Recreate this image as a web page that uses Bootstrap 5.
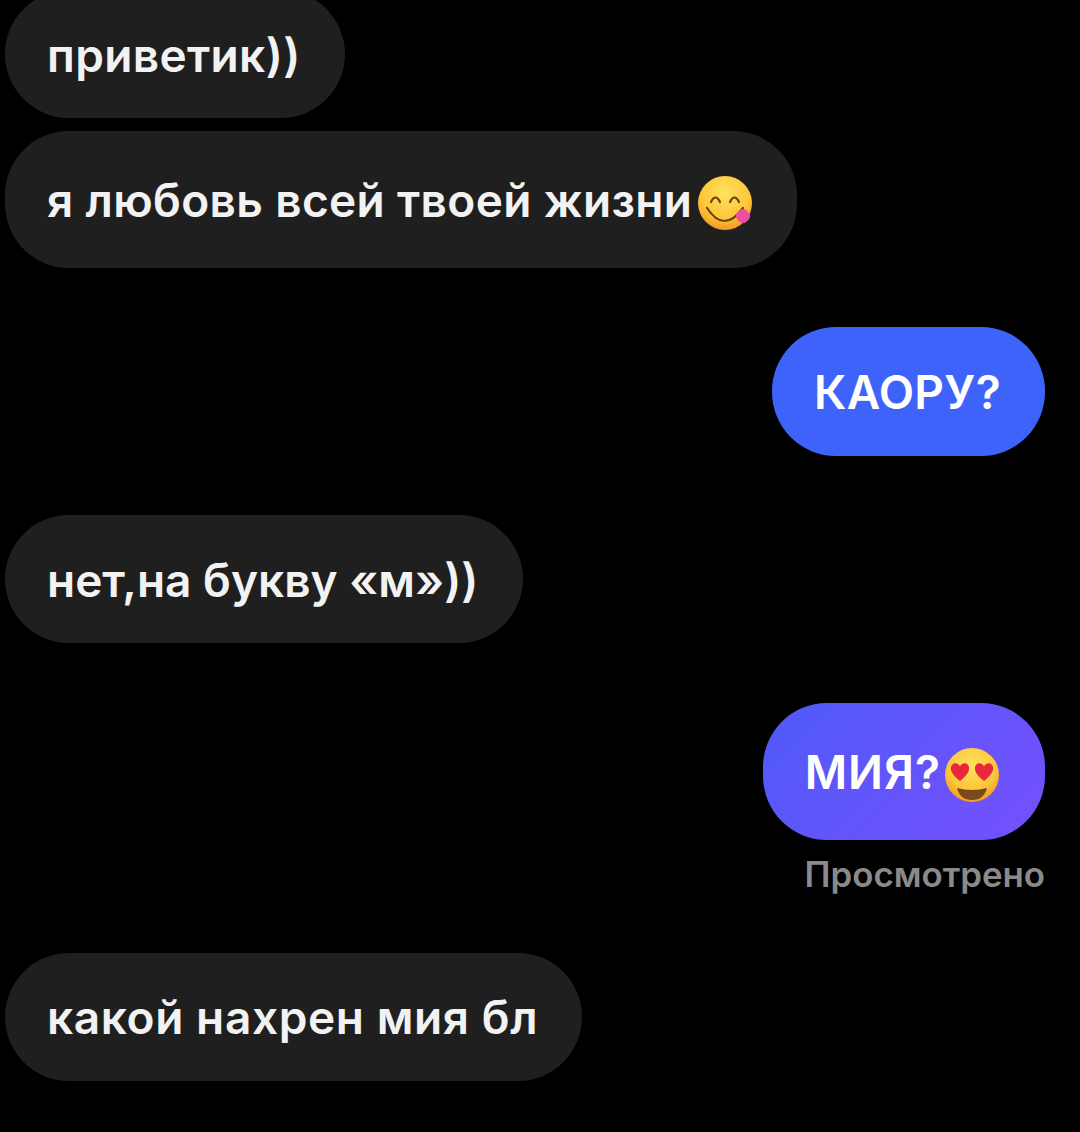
<!DOCTYPE html>
<html lang="ru">
<head>
  <meta charset="UTF-8" />
  <meta name="viewport" content="width=device-width, initial-scale=1.0"/>
  <title>Переписка</title>
  <link href="https://cdn.jsdelivr.net/npm/bootstrap@5.3.0/dist/css/bootstrap.min.css" rel="stylesheet">
  <style>
    html, body { background: #000; height: 100%; }
    body { overflow: hidden; font-family: Inter, "Liberation Sans", sans-serif; }
    .chat { height: 1132px; overflow: hidden; padding: 0 35px 0 5px; }
    .bubble {
      height: 128px; padding: 1px 44px 0 42px; border-radius: 64px;
      font-size: 46px; font-weight: 600; line-height: 1; letter-spacing: .35px;
      color: #fff; white-space: nowrap;
    }
    .bubble-in { background: #1f1f1f; color: #f2f2f2; }
    .bubble-kaoru { background: #3e63fb; height: 129px; }
    .bubble-miya { background: linear-gradient(135deg, #4f5af8, #7650fc); height: 137px; letter-spacing: 1px; padding-right: 45px; }
    .tall { height: 137px; }
    .first { margin-top: -10px; }
    .gap-s { margin-top: 13px; }
    .gap-l { margin-top: 59px; }
    .gap-m { margin-top: 59px; letter-spacing: 0; }
    .gap-x { margin-top: 60px; }
    .gap-v { margin-top: 61px; letter-spacing: .6px; }
    .seen { font-size: 34.8px; font-weight: 600; color: #8a8a8a; line-height: 1; margin-top: 17px; }
    .emoji { width: 56px; height: 56px; flex: none; margin-left: 5px; margin-top: 6px; }
    .bubble-miya .emoji { margin-left: 3px; }
  </style>
</head>
<body>
  <div class="chat d-flex flex-column">
    <div class="bubble bubble-in first align-self-start d-flex align-items-center">приветик))</div>
    <div class="bubble bubble-in tall gap-s align-self-start d-flex align-items-center">
      <span>я любовь всей твоей жизни</span>
      <svg class="emoji" viewBox="0 0 56 56">
        <defs>
          <radialGradient id="fa" cx="50%" cy="32%" r="70%">
            <stop offset="0" stop-color="#ffe25f"/><stop offset=".65" stop-color="#fdc63a"/><stop offset="1" stop-color="#f2951f"/>
          </radialGradient>
        </defs>
        <circle cx="28" cy="28" r="27" fill="url(#fa)"/>
        <path d="M14 27q4.5-9 9 0M33 27q4.5-9 9 0" fill="none" stroke="#6a4212" stroke-width="2.2" stroke-linecap="round"/>
        <path d="M10 33q17 26 36 0" fill="none" stroke="#6a4212" stroke-width="2.2" stroke-linecap="round"/>
        <rect x="39.5" y="34.5" width="13" height="13" rx="5" transform="rotate(-40 46 41)" fill="#ee4f9e"/>
      </svg>
    </div>
    <div class="bubble bubble-kaoru gap-l align-self-end d-flex align-items-center">КАОРУ?</div>
    <div class="bubble bubble-in gap-m align-self-start d-flex align-items-center">нет,на букву «м»))</div>
    <div class="bubble bubble-miya gap-x align-self-end d-flex align-items-center">
      <span>МИЯ?</span>
      <svg class="emoji" viewBox="0 0 56 56">
        <defs>
          <radialGradient id="fb" cx="50%" cy="32%" r="70%">
            <stop offset="0" stop-color="#ffe25f"/><stop offset=".65" stop-color="#fdc63a"/><stop offset="1" stop-color="#f2951f"/>
          </radialGradient>
        </defs>
        <circle cx="28" cy="28" r="27" fill="url(#fb)"/>
        <path d="M16 34C8 28 5 22 8 18c2-3 6-2 8 1 2-3 6-4 8-1 3 4 0 10-8 16z" fill="#e8283c"/>
        <path d="M40 34c8-6 11-12 8-16-2-3-6-2-8 1-2-3-6-4-8-1-3 4 0 10 8 16z" fill="#e8283c"/>
        <path d="M13 41q15 4 30 0q-3 12-15 12t-15-12z" fill="#7a4a1c"/>
      </svg>
    </div>
    <div class="seen align-self-end">Просмотрено</div>
    <div class="bubble bubble-in gap-v align-self-start d-flex align-items-center">какой нахрен мия бл</div>
  </div>
  <script src="https://cdn.jsdelivr.net/npm/bootstrap@5.3.0/dist/js/bootstrap.bundle.min.js"></script>
</body>
</html>
